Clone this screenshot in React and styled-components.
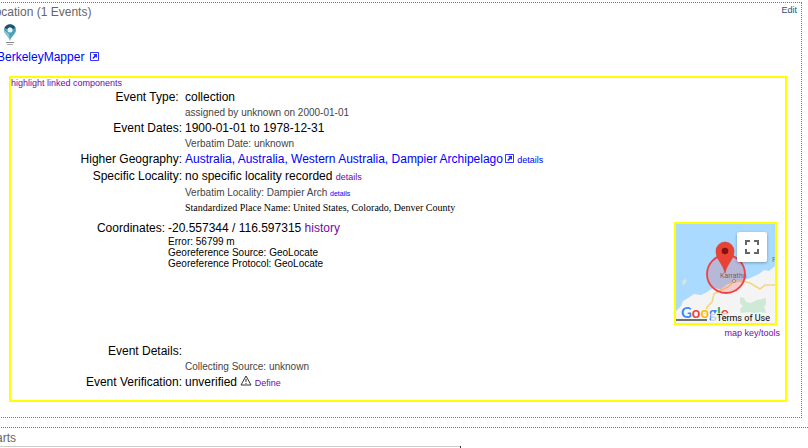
import styled, { createGlobalStyle } from "styled-components";

const GlobalStyle = createGlobalStyle`
  body {
    margin: 0;
    overflow: hidden;
    background: #fff;
    color: #000;
    font-family: "Liberation Sans", Arial, sans-serif;
    font-size: 12px;
    line-height: 16px;
  }
`;

function ExternalIcon() {
  return (
    <IconSvg width="9" height="9" viewBox="0 0 9 9" aria-hidden="true">
      <path d="M.5 .5h8v8h-8z" fill="none" stroke="currentColor" strokeWidth=".8" />
      <path d="M3 2h4v4L5.800 4.800 3.300 7 2.300 6 4.500 3.500z" fill="currentColor" opacity=".85" />
    </IconSvg>
  );
}

function MapperIcon() {
  return (
    <MapperSvg width="14" height="22" viewBox="0 0 14 22" aria-hidden="true">
      <path d="M7 17C6 12 1 10 1 6a6 6 0 0 1 12 0c0 4-5 6-6 11z" fill="#4ba3b8" />
      <path d="M7 17C6 12 1 10 1 6l5 4z" fill="#8cc5d2" />
      <path d="M1.500 4a6 6 0 0 1 11 0L10 5 7 3 4 5z" fill="#254f68" />
      <circle cx="7" cy="6" r="2.500" fill="#e4f3f7" />
      <path d="M3 18.500h8" stroke="#888" />
      <path d="M4 20.500h6" stroke="#aaa" />
    </MapperSvg>
  );
}

function WarningIcon() {
  return (
    <WarningSvg width="12" height="11" viewBox="0 0 12 11" aria-hidden="true">
      <path d="M6 1l5 9H1z" fill="none" stroke="#333" strokeLinejoin="round" />
      <path d="M6 4v3M6 8v1" stroke="#333" />
    </WarningSvg>
  );
}

function LocalityMap() {
  return (
    <MapFrame>
      <MapSvg viewBox="0 0 99 99" preserveAspectRatio="xMidYMid slice" role="img" aria-label="Map of Karratha">
        <path d="M0 0h99v99H0z" fill="#aadaff" />
        <path d="M0 87l5-5 2-5 5-3 6-4 7 1 6-3 6-4 8 1 7-5 9-2 8-2 5-2 9-4 5-4 5 1 6-5v57H0z" fill="#f3f4f3" />
        <path d="M6 60l1-4 3-1 1 2-3 4z" fill="#cfead5" />
        <path d="M64 73l4 1 2 4 5 1 6-3 9-2v7l-2 1 2 7-6-1-6 1-6-1-7 1-1-4 3-3-3-3z" fill="#ceead6" />
        <path d="M29 90l2-7 5-5 2-8 7-4 7-3 5-5 9-1 8 2 10 6 5-4h10" fill="none" stroke="#f5d581" strokeWidth="1.500" />
        <text x="44" y="54" fontSize="7" fill="#6e6e72" fontFamily="Roboto, sans-serif">Karratha</text>
        <circle cx="58" cy="57" r="1.500" fill="#fff" stroke="#777" strokeWidth=".7" />
        <text x="96" y="38" fontSize="8" fill="#777" fontFamily="Roboto, sans-serif">P</text>
        <circle cx="50" cy="50" r="19" fill="#ff000029" stroke="#ef3f4a" strokeWidth="1.800" />
        <path d="M49 49C47 39 40 36 40 27a9 9 0 0 1 18 0c0 9-7 12-9 22z" fill="#ea4335" stroke="#d33b2d" strokeWidth=".6" />
        <circle cx="49" cy="27" r="3.300" fill="#811411" />
        <text x="5" y="94" fontSize="15" fontFamily="Lato, sans-serif" fontWeight="700" stroke="#fff" strokeWidth="1.500" paintOrder="stroke">
          <tspan fill="#4285f4">G</tspan>
          <tspan fill="#ea4335">o</tspan>
          <tspan fill="#fbbc05">o</tspan>
          <tspan fill="#4285f4">g</tspan>
          <tspan fill="#34a853">l</tspan>
          <tspan fill="#ea4335">e</tspan>
        </text>
        <path d="M0 96h31" stroke="#444" strokeWidth="1.500" />
      </MapSvg>
      <FullscreenButton type="button" aria-label="Toggle fullscreen view">
        <svg width="14" height="14" viewBox="0 0 14 14" aria-hidden="true">
          <path d="M1 5V1h4M9 1h4v4M13 9v4H9M5 13H1V9" fill="none" stroke="#666" strokeWidth="2" />
        </svg>
      </FullscreenButton>
      <Terms href="#terms">Terms of Use</Terms>
    </MapFrame>
  );
}

function App() {
  return (
    <Page>
      <GlobalStyle />
      <Panel>
        <PanelHead>
          <PanelTitle>Location (1 Events)</PanelTitle>
          <EditLink href="#edit">Edit</EditLink>
        </PanelHead>
        <MapperIcon />
        <MapperLink href="#mapper">
          BerkeleyMapper <ExternalIcon />
        </MapperLink>
        <EventBox>
          <HighlightLink href="#highlight" $visited>highlight linked components</HighlightLink>
          <Details>
            <Label>Event Type:&nbsp;</Label>
            <Value>collection</Value>
            <Note>assigned by unknown on 2000-01-01</Note>
            <Label>Event Dates:</Label>
            <Value>1900-01-01 to 1978-12-31</Value>
            <Note>Verbatim Date: unknown</Note>
            <Label>Higher Geography:</Label>
            <Value>
              <Link href="#geography">
                Australia, Australia, Western Australia, Dampier Archipelago
                <ExternalIcon />
              </Link>{" "}
              <SmallLink href="#geography-details">details</SmallLink>
            </Value>
            <Label>Specific Locality:</Label>
            <Value>
              no specific locality recorded{" "}
              <SmallLink href="#locality-details" $visited>details</SmallLink>
            </Value>
            <Note>
              Verbatim Locality: Dampier Arch <TinyLink href="#verbatim-details">details</TinyLink>
            </Note>
            <PlaceName>Standardized Place Name: United States, Colorado, Denver County</PlaceName>
          </Details>
          <CoordinateRow>
            <CoordinateLabel>Coordinates:</CoordinateLabel>
            <CoordinateValue>
              <div>
                -20.557344 / 116.597315 <Link href="#history" $visited>history</Link>
              </div>
              <Georeference>
                <div>Error: 56799 m</div>
                <div>Georeference Source: GeoLocate</div>
                <div>Georeference Protocol: GeoLocate</div>
              </Georeference>
            </CoordinateValue>
            <MapCell>
              <LocalityMap />
              <SmallLink href="#map-key" $visited>map key/tools</SmallLink>
            </MapCell>
          </CoordinateRow>
          <Details>
            <Label>Event Details:</Label>
            <Value />
            <Note>Collecting Source: unknown</Note>
            <Label>Event Verification:</Label>
            <Value>
              unverified <WarningIcon /> <SmallLink href="#define" $visited>Define</SmallLink>
            </Value>
          </Details>
        </EventBox>
      </Panel>
      <PartsPanel>
        <PanelTitle>Parts</PanelTitle>
        <PartsTable>
          <tbody>
            <tr>
              <td />
            </tr>
          </tbody>
        </PartsTable>
      </PartsPanel>
    </Page>
  );
}

const Page = styled.main`
  height: 100vh;
  padding-top: 2px;
  box-sizing: border-box;
  overflow: hidden;
`;

const Panel = styled.section`
  margin: 0 6px 0 -15px;
  padding: 0 14px 15px 2px;
  border: 1px dotted #777;
`;

const PartsPanel = styled.section`
  margin: 9px -12px 0 -15px;
  padding: 2px 2px 0;
  border: 1px dotted #777;
`;

const PanelHead = styled.header`
  display: flex;
  justify-content: space-between;
  height: 20px;
  margin-right: -10px;
  padding-top: 1px;
`;

const PanelTitle = styled.h2`
  margin: 0;
  color: #666;
  font-size: 12px;
  font-weight: 400;
  line-height: 16px;
`;

const Link = styled.a`
  color: ${({ $visited }) => ($visited ? "#7209a4" : "#00f")};
  text-decoration: none;
`;

const SmallLink = styled(Link)`
  font-size: 9px;
`;

const TinyLink = styled(Link)`
  font-size: 7px;
`;

const EditLink = styled(Link)`
  color: #1f4f86;
  font-size: 9px;
  line-height: 12px;
`;

const MapperLink = styled(Link)`
  display: block;
  margin: 3px 0 11px 9px;
`;

const HighlightLink = styled(SmallLink)`
  display: block;
  line-height: 11px;
`;

const EventBox = styled.div`
  margin-left: 21px;
  border: 2px solid #ff0;
  padding-bottom: 9px;
`;

const Details = styled.dl`
  display: grid;
  grid-template-columns: 171px 1fr;
  column-gap: 3px;
  margin: 0;
`;

const Label = styled.dt`
  text-align: right;
`;

const Value = styled.dd`
  margin: 0;
`;

const Note = styled.dd`
  grid-column: 2;
  margin: 0;
  padding-top: 1px;
  color: #444;
  font-size: 10px;
  line-height: 14px;
`;

const PlaceName = styled(Note)`
  margin-bottom: 2px;
  padding-top: 0;
  color: #000;
  font-family: "Liberation Serif", "Times New Roman", serif;
  line-height: 13px;
`;

const CoordinateRow = styled.div`
  display: grid;
  grid-template-columns: 154px 1fr auto;
  column-gap: 3px;
  min-height: 121px;
  margin-top: 6px;
`;

const CoordinateLabel = styled.div`
  text-align: right;
  line-height: 12px;
`;

const CoordinateValue = styled.div`
  line-height: 12px;
`;

const Georeference = styled.div`
  margin-top: 2px;
  font-size: 10px;
  line-height: 11px;
`;

const MapCell = styled.div`
  display: flex;
  flex-direction: column;
  align-items: flex-end;
  padding-right: 5px;
`;

const MapFrame = styled.div`
  position: relative;
  width: 99px;
  height: 99px;
  margin-right: 3px;
  border: 2px solid #ff0;
  overflow: hidden;
`;

const MapSvg = styled.svg`
  display: block;
  width: 100%;
  height: 100%;
`;

const FullscreenButton = styled.button`
  position: absolute;
  top: 8px;
  right: 8px;
  display: grid;
  place-items: center;
  width: 30px;
  height: 30px;
  padding: 0;
  border: 0;
  border-radius: 2px;
  background: #fff;
  box-shadow: 0 1px 3px rgba(0, 0, 0, 0.3);
`;

const Terms = styled.a`
  position: absolute;
  right: 0;
  bottom: 0;
  padding: 0 5px 0 6px;
  background: rgba(245, 245, 245, 0.7);
  color: #000;
  font-family: Roboto, sans-serif;
  font-size: 9px;
  line-height: 10px;
  text-decoration: none;
`;

const IconSvg = styled.svg`
  margin-left: 2px;
`;

const MapperSvg = styled.svg`
  display: block;
  margin-left: 15px;
`;

const WarningSvg = styled.svg`
  margin-right: -1px;
`;

const PartsTable = styled.table`
  width: 57%;
  height: 20px;
  border: 1px solid #333;
  border-top-color: #ccc;
  border-collapse: collapse;
`;

export default App;
